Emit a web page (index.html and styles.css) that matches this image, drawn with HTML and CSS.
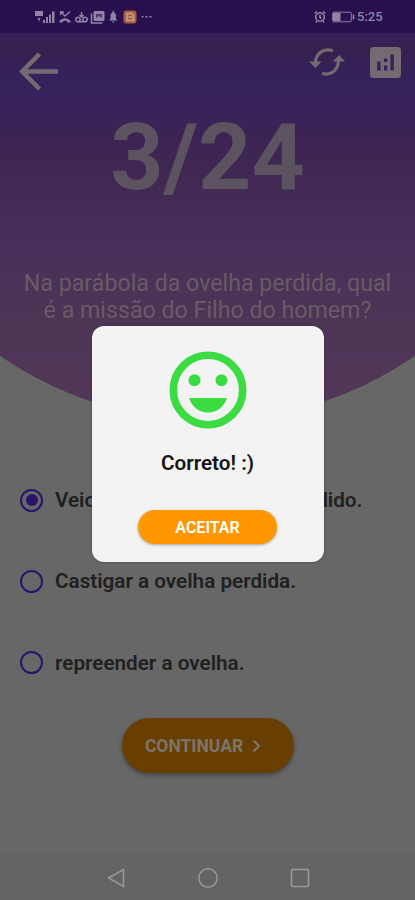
FILE: index.html
```html
<!DOCTYPE html>
<html lang="pt">
<head>
<meta charset="utf-8">
<title>Quiz</title>
<link rel="stylesheet" href="styles.css">
</head>
<body>
<div class="screen">
  <div class="status">
    <div class="status-left">
      <svg width="120" height="20" viewBox="0 0 120 20" fill="#8f84a6">
        <path d="M1 5h8v5H1zM3.500 12h3L5 15.500zM9 14h2v3H9zM12 11h2v6h-2zM15 8.500h2V17h-2zM18 5.500h2.500V17H18z"/>
        <path d="M25 16c3-5 9-5 12 0l-3 .8-1.500-2h-3l-1.500 2z"/>
        <path d="M27 6l4 4 5-4.500M26.500 9V6H30" fill="none" stroke="#8f84a6" stroke-width="1.300"/>
        <g fill="none" stroke="#8f84a6" stroke-width="1.500"><circle cx="44" cy="13.500" r="2.200"/><circle cx="51" cy="13.500" r="2.200"/><path d="M44 15.700h7M47.500 6v5M45.500 9l2 2 2-2"/></g>
        <rect x="59.500" y="5" width="11" height="10" rx="1.500"/><path d="M57.500 7.500v9.500h11" fill="none" stroke="#8f84a6" stroke-width="1.500"/>
        <path d="M62 8h6v4l-3-2-3 2z" fill="#4c3a70"/>
        <path d="M75 14.500l1.500-1.700V10c0-2 .8-3 2-3.500V5H80v1.500c1.300.5 2 1.500 2 3.500v2.800l1.500 1.700zM77.800 15.500h3l-1.500 1.500z"/>
        <rect x="89.500" y="4.500" width="13" height="13" rx="3" fill="#b25c3a"/>
        <path d="M93 7.500h5l1.500 1.500v5.500H93zM94.500 11h4" fill="none" stroke="#b3a6a0" stroke-width="1.500"/>
        <path d="M107.500 10h2v1.500h-2zM111.500 10h2v1.500h-2zM115.500 10h2v1.500h-2z"/>
      </svg>
    </div>
    <div class="status-right">
      <svg width="42" height="16" viewBox="0 0 42 16" fill="none" stroke="#8f84a6" stroke-width="1.600">
        <circle cx="7" cy="8" r="4.300"/><path d="M7 5.500v3l1.500 1M1.500 4.500L4 2.500M12.500 4.500L10 2.500M4 12l-1 1.500M10 12l1 1.500"/>
        <rect x="19.700" y="3.200" width="18.600" height="9.600" rx="1.500" stroke-width="1"/><path d="M20 4h7.500v8H20z" fill="#8f84a6" stroke="none"/><path d="M40.500 5.500v5"/>
      </svg>
      <span class="clock">5:25</span>
    </div>
  </div>
  <header class="hero">
    <div class="toolbar">
      <svg class="back" width="41" height="40" viewBox="0 0 41 40" fill="none" stroke="#736a72" stroke-width="4.600"><path d="M21.500 2L4.200 19.500 21.500 37M5 19.500h35"/></svg>
      <div class="actions">
        <svg width="36" height="30" viewBox="0 0 36 30" fill="none" stroke="#736a72" stroke-width="3.200">
          <path d="M24 3.700C14 .7 6.500 7 6.500 16M13 26.300C23 29.300 29.500 22 29.500 13"/>
          <path d="M0 14.500h12.500L6.500 21zM36 14.500H23.500L30 8z" fill="#736a72" stroke="none"/>
        </svg>
        <svg width="31" height="31" viewBox="0 0 31 31"><rect width="31" height="31" rx="3.500" fill="#736a72"/><path d="M7.200 14.500h3.300v9H7.200zM14 11.500h3.300V15H14zM14 18.500h3.300v5H14zM20.500 7.500h3.300v16h-3.300z" fill="#382058"/></svg>
      </div>
    </div>
    <div class="counter">3/24</div>
    <p class="question">Na parábola da ovelha perdida, qual<br>é a missão do Filho do homem?</p>
  </header>
  <main class="options">
    <div class="option"><span class="radio on"></span><span class="tight">Veio buscar o que estava perdido.</span></div>
    <div class="option"><span class="radio"></span><span>Castigar a ovelha perdida.</span></div>
    <div class="option"><span class="radio"></span><span>repreender a ovelha.</span></div>
  </main>
  <div class="next">CONTINUAR
    <svg width="10" height="16" viewBox="0 0 10 16" fill="none" stroke="#7d756b" stroke-width="2.200"><path d="M1.500 2.500L7 8l-5.500 5.500"/></svg>
  </div>
  <nav class="navbar">
    <svg width="20" height="22" viewBox="0 0 20 22"><path d="M2.500 11L17.500 2.500v17z"/></svg>
    <svg width="22" height="22" viewBox="0 0 22 22"><circle cx="11" cy="11" r="9.200"/></svg>
    <svg width="20" height="22" viewBox="0 0 20 22"><rect x="1.500" y="2.500" width="17" height="17" rx="1"/></svg>
  </nav>
  <div class="overlay">
    <div class="dialog">
      <svg class="smile" width="78" height="78" viewBox="0 0 78 78" fill="#3bdc42"><circle cx="39" cy="39" r="34.700" fill="none" stroke="#3bdc42" stroke-width="7.600"/><circle cx="25.500" cy="29.300" r="6"/><circle cx="52.500" cy="29.300" r="6"/><path d="M20 47h38C55 56 48 61.500 39 61.500S23 56 20 47z"/></svg>
      <div class="title">Correto! :)</div>
      <div class="accept">ACEITAR</div>
    </div>
  </div>
</div>
</body>
</html>
```
FILE: styles.css
```css
* { box-sizing: border-box; }
body { margin: 0; font-family: Roboto, "Liberation Sans", sans-serif; background: #676767; }
.screen { position: relative; width: 415px; height: 900px; overflow: hidden; display: flex; flex-direction: column; background: #676767; }
.status { height: 33px; flex: none; background: #29114f; display: flex; justify-content: space-between; padding: 6px 32px 0 34px; }
.status-left, .status-right { display: flex; }
.status-right { padding-top: 3px; gap: 2px; }
.clock { font-size: 13px; line-height: 16px; font-weight: 500; color: #8f84a6; width: 26px; white-space: nowrap; }
.hero { height: 387px; flex: none; background: linear-gradient(#35225b 0, #37204f 16px, #35225b 40px, #38235c 75px, #3b2454 100px, #432a54 160px, #48305b 215px, #4a3158 240px, #4d3556 290px, #543759 387px); clip-path: circle(365px at 50% 22.500px); }
.toolbar { height: 63px; display: flex; justify-content: space-between; padding: 14px 14px 0 18px; }
.back { margin-top: 5px; }
.actions { display: flex; gap: 25px; }
.counter { height: 120px; margin-top: 2px; text-align: center; font-size: 93px; line-height: 120px; font-weight: 700; color: #5d5260; }
.question { margin: 52px 0 0; text-align: center; font-size: 23.200px; line-height: 27px; color: #685b66; white-space: nowrap; }
.options { margin-top: 39px; display: flex; flex-direction: column; flex: none; }
.option { height: 81.300px; display: flex; align-items: center; gap: 12px; padding: 1px 0 0 20px; font-size: 20.700px; font-weight: 600; color: #202020; white-space: nowrap; }
.tight { word-spacing: -1.200px; }
.radio { width: 23px; height: 23px; flex: none; border: 2px solid #2a1569; border-radius: 50%; display: grid; place-items: center; }
.on::after { content: ""; width: 12px; height: 12px; border-radius: 50%; background: #2a1569; }
.next { align-self: center; flex: none; margin-top: 15px; width: 172px; height: 55px; border-radius: 28px; background: #683f00; box-shadow: 0 2px 4px #444; color: #7d756b; font-size: 17.500px; font-weight: 700; display: flex; align-items: center; justify-content: center; gap: 9px; padding: 1px 8px 0 0; }
.navbar { margin-top: auto; height: 46px; flex: none; background: #646464; display: flex; justify-content: space-between; align-items: center; padding: 1px 105px 0 106px; }
.navbar svg { fill: none; stroke: #989898; stroke-width: 1.600; }
.overlay { position: absolute; inset: 0; display: flex; justify-content: center; align-items: flex-start; padding-top: 326px; }
.dialog { width: 232px; height: 236px; border-radius: 12px; background: #f3f3f3; box-shadow: 0 0 3px #40204a80; display: flex; flex-direction: column; align-items: center; }
.smile { margin-top: 25px; }
.title { margin-top: 22px; font-size: 20.700px; line-height: 24px; font-weight: 600; color: #151515; }
.accept { margin-top: 35px; width: 139px; height: 34px; border-radius: 17px; background: #ff9800; box-shadow: 0 1px 3px #0005; color: #fff; font-size: 16px; font-weight: 600; line-height: 35px; text-align: center; }
```
